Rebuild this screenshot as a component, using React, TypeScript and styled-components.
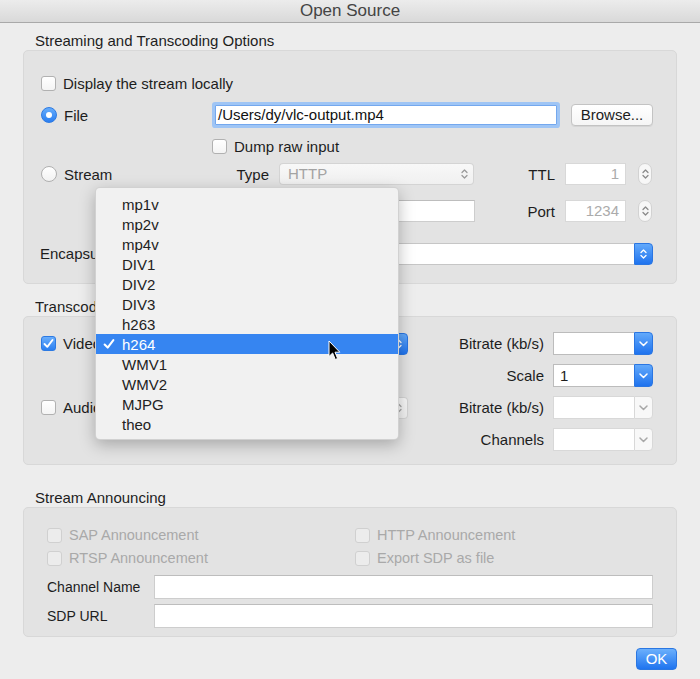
import React from 'react';
import styled, { createGlobalStyle } from 'styled-components';

/**
 * Icons
 */
const UpDown = ({ color }: { color: string }) => (
  <svg width="7" height="12" viewBox="0 0 7 12">
    <path
      d="M1 4.5 L3.5 2 L6 4.5 M1 7.5 L3.5 10 L6 7.5"
      fill="none"
      stroke={color}
      strokeWidth="1.3"
      strokeLinecap="round"
      strokeLinejoin="round"
    />
  </svg>
);

const Down = ({ color }: { color: string }) => (
  <svg width="9" height="6" viewBox="0 0 9 6">
    <path d="M1 1 L4.5 4.5 L8 1" fill="none" stroke={color} strokeWidth="1.5" strokeLinecap="round" strokeLinejoin="round" />
  </svg>
);

const Tick = ({ size = 11 }: { size?: number }) => (
  <svg width={size} height={size} viewBox="0 0 11 11">
    <path d="M1.5 6 L4.3 8.8 L9.5 2" fill="none" stroke="#fff" strokeWidth="1.9" strokeLinecap="round" strokeLinejoin="round" />
  </svg>
);

const Cursor = () => (
  <svg width="13" height="21" viewBox="0 0 13 21">
    <path d="M1 1 L1 16.5 L4.6 13 L7.3 19.5 L9.6 18.5 L7 12.2 L11.8 12.2 Z" fill="#000" stroke="#fff" strokeWidth="1" strokeLinejoin="round" />
  </svg>
);

/**
 * Consts
 */
const codecs = ['mp1v', 'mp2v', 'mp4v', 'DIV1', 'DIV2', 'DIV3', 'h263', 'h264', 'WMV1', 'WMV2', 'MJPG', 'theo'];
const selectedCodec = 'h264';

const App = () => {
  return (
    <Window>
      <GlobalStyle />
      <TitleBar>Open Source</TitleBar>
      <Body>
        <SectionTitle $top={9}>Streaming and Transcoding Options</SectionTitle>
        <GroupBox $pad="22px 23px 18px 17px">
          <Row $h={20}>
            <Checkbox />
            <Label>Display the stream locally</Label>
          </Row>

          <Row $h={26} $top={9}>
            <LeftCell>
              <Radio $on />
              <Label>File</Label>
            </LeftCell>
            <FileField>/Users/dy/vlc-output.mp4</FileField>
            <Button>Browse...</Button>
          </Row>

          <Row $h={18} $top={9} $indent={171}>
            <Checkbox />
            <Label>Dump raw input</Label>
          </Row>

          <Row $h={22} $top={8}>
            <LeftCell>
              <Radio />
              <Label>Stream</Label>
            </LeftCell>
            <FieldLabel $w={67}>Type</FieldLabel>
            <PopUp $w={195}>
              <PopUpBody $muted>HTTP</PopUpBody>
              <PopUpEnd>
                <UpDown color="#9a9a9a" />
              </PopUpEnd>
            </PopUp>
            <FieldLabel $w={91}>TTL</FieldLabel>
            <NumField>1</NumField>
            <Stepper>
              <UpDown color="#8a8a8a" />
            </Stepper>
          </Row>

          <Row $h={22} $top={15}>
            <LeftCell />
            <FieldLabel $w={67}>Address</FieldLabel>
            <TextField $w={196} />
            <FieldLabel $w={90}>Port</FieldLabel>
            <NumField>1234</NumField>
            <Stepper>
              <UpDown color="#8a8a8a" />
            </Stepper>
          </Row>

          <Row $h={23} $top={20}>
            <Label $flush>Encapsulation</Label>
            <PopUp $grow>
              <PopUpBody />
              <PopUpEnd $blue>
                <UpDown color="#fff" />
              </PopUpEnd>
            </PopUp>
          </Row>
        </GroupBox>

        <SectionTitle $top={14}>Transcoding options</SectionTitle>
        <GroupBox $pad="15px 23px 13px 17px">
          <TranscodeGrid>
            <Cell>
              <Checkbox $checked>
                <Tick />
              </Checkbox>
              <Label>Video</Label>
            </Cell>
            <PopUp>
              <PopUpBody />
              <PopUpEnd $blue>
                <UpDown color="#fff" />
              </PopUpEnd>
            </PopUp>
            <GridLabel>Bitrate (kb/s)</GridLabel>
            <Combo>
              <ComboField />
              <ComboArrow>
                <Down color="#fff" />
              </ComboArrow>
            </Combo>

            <Cell />
            <Cell />
            <GridLabel>Scale</GridLabel>
            <Combo>
              <ComboField>1</ComboField>
              <ComboArrow>
                <Down color="#fff" />
              </ComboArrow>
            </Combo>

            <Cell>
              <Checkbox />
              <Label>Audio</Label>
            </Cell>
            <PopUp>
              <PopUpBody $muted />
              <PopUpEnd>
                <UpDown color="#a5a5a5" />
              </PopUpEnd>
            </PopUp>
            <GridLabel>Bitrate (kb/s)</GridLabel>
            <Combo>
              <ComboField $disabled />
              <ComboArrow $disabled>
                <Down color="#a8a8a8" />
              </ComboArrow>
            </Combo>

            <Cell />
            <Cell />
            <GridLabel>Channels</GridLabel>
            <Combo>
              <ComboField $disabled />
              <ComboArrow $disabled>
                <Down color="#a8a8a8" />
              </ComboArrow>
            </Combo>
          </TranscodeGrid>
        </GroupBox>

        <SectionTitle $top={24}>Stream Announcing</SectionTitle>
        <GroupBox $pad="18px 23px 8px 23px">
          <AnnounceGrid>
            <Cell>
              <Checkbox $disabled />
              <Label $disabled>SAP Announcement</Label>
            </Cell>
            <Cell>
              <Checkbox $disabled />
              <Label $disabled>HTTP Announcement</Label>
            </Cell>
            <Cell>
              <Checkbox $disabled />
              <Label $disabled>RTSP Announcement</Label>
            </Cell>
            <Cell>
              <Checkbox $disabled />
              <Label $disabled>Export SDP as file</Label>
            </Cell>
          </AnnounceGrid>
          <Row $h={24} $top={8}>
            <SmallLabel>Channel Name</SmallLabel>
            <TextField $grow $h={24} />
          </Row>
          <Row $h={24} $top={5}>
            <SmallLabel>SDP URL</SmallLabel>
            <TextField $grow $h={24} />
          </Row>
        </GroupBox>

        <Footer>
          <OkButton>OK</OkButton>
        </Footer>
      </Body>

      <Menu>
        {codecs.map((codec) => {
          const selected = codec === selectedCodec;
          return (
            <MenuItem key={codec} $selected={selected}>
              <CheckSlot>{selected && <Tick size={12} />}</CheckSlot>
              {codec}
            </MenuItem>
          );
        })}
      </Menu>
      <Pointer>
        <Cursor />
      </Pointer>
    </Window>
  );
};

/**
 * Styled Components
 */
const GlobalStyle = createGlobalStyle`
  html, body {
    margin: 0;
    padding: 0;
    background: #ececec;
  }
  body {
    font-family: "Liberation Sans", Arial, sans-serif;
    font-size: 15px;
    color: #1d1d1d;
  }
`;

const Window = styled.div`
  position: relative;
  width: 700px;
  height: 679px;
  overflow: hidden;
  background: #ededed;
`;

const TitleBar = styled.div`
  height: 22px;
  line-height: 22px;
  text-align: center;
  font-size: 17px;
  color: #444;
  background: linear-gradient(#ececec, #d9d9d9);
  border-bottom: 1px solid #a9a9a9;
`;

const Body = styled.div`
  padding: 0 23px;
`;

const SectionTitle = styled.div<{ $top: number }>`
  margin-top: ${(p) => p.$top}px;
  padding-left: 12px;
  height: 18px;
  line-height: 18px;
  color: #1e1e1e;
`;

const GroupBox = styled.div<{ $pad: string }>`
  background: #e3e3e3;
  border: 1px solid #d8d8d8;
  border-radius: 5px;
  padding: ${(p) => p.$pad};
`;

const Row = styled.div<{ $h: number; $top?: number; $indent?: number }>`
  display: flex;
  align-items: center;
  height: ${(p) => p.$h}px;
  margin-top: ${(p) => p.$top || 0}px;
  padding-left: ${(p) => p.$indent || 0}px;
`;

const LeftCell = styled.div`
  display: flex;
  align-items: center;
  width: 171px;
  flex-shrink: 0;
`;

const Cell = styled.div`
  display: flex;
  align-items: center;
`;

const Label = styled.span<{ $disabled?: boolean; $flush?: boolean }>`
  margin-left: ${(p) => (p.$flush ? '-1px' : '7px')};
  white-space: nowrap;
  color: ${(p) => (p.$disabled ? '#a9a9a9' : '#1d1d1d')};
`;

/* right-aligned label; its width covers the gap to the control after it */
const FieldLabel = styled.span<{ $w: number }>`
  width: ${(p) => p.$w}px;
  flex-shrink: 0;
  padding-right: 10px;
  box-sizing: border-box;
  display: flex;
  justify-content: flex-end;
  white-space: nowrap;
`;

const GridLabel = styled.span`
  text-align: right;
  white-space: nowrap;
`;

const SmallLabel = styled.span`
  width: 107px;
  flex-shrink: 0;
  font-size: 14px;
  white-space: nowrap;
`;

const Checkbox = styled.span<{ $checked?: boolean; $disabled?: boolean }>`
  width: 15px;
  height: 15px;
  box-sizing: border-box;
  border-radius: 3px;
  flex-shrink: 0;
  display: flex;
  align-items: center;
  justify-content: center;
  background: ${(p) =>
    p.$checked ? 'linear-gradient(#6aaefc, #2a7ff1)' : p.$disabled ? '#ececec' : 'linear-gradient(#ffffff, #f4f4f4)'};
  border: 1px solid ${(p) => (p.$checked ? '#2c7ae3' : p.$disabled ? '#d0d0d0' : '#b1b1b1')};
`;

const Radio = styled.span<{ $on?: boolean }>`
  position: relative;
  width: 16px;
  height: 16px;
  box-sizing: border-box;
  border-radius: 50%;
  flex-shrink: 0;
  background: ${(p) => (p.$on ? 'linear-gradient(#66adfc, #2a7ef0)' : 'linear-gradient(#ffffff, #f2f2f2)')};
  border: 1px solid ${(p) => (p.$on ? '#2d7ae2' : '#b0b0b0')};
  &::after {
    content: '';
    display: ${(p) => (p.$on ? 'block' : 'none')};
    position: absolute;
    left: 4px;
    top: 4px;
    width: 6px;
    height: 6px;
    border-radius: 50%;
    background: #fff;
  }
`;

const FileField = styled.div`
  width: 342px;
  height: 20px;
  margin: 0 3px;
  flex-shrink: 0;
  box-sizing: border-box;
  padding-left: 2px;
  line-height: 18px;
  background: #fff;
  border: 1px solid #74a8ee;
  border-radius: 1px;
  box-shadow: 0 0 0 3px #9fc5f5;
  color: #111;
`;

const Button = styled.div`
  width: 82px;
  height: 22px;
  margin-left: 11px;
  box-sizing: border-box;
  line-height: 20px;
  text-align: center;
  background: linear-gradient(#ffffff, #f5f5f5);
  border: 1px solid #c3c3c3;
  border-radius: 4px;
  box-shadow: 0 1px 0 rgba(0, 0, 0, 0.06);
`;

const TextField = styled.div<{ $w?: number; $grow?: boolean; $h?: number }>`
  width: ${(p) => (p.$w ? `${p.$w}px` : 'auto')};
  flex: ${(p) => (p.$grow ? 1 : '0 0 auto')};
  height: ${(p) => p.$h || 22}px;
  box-sizing: border-box;
  background: #fff;
  border: 1px solid #cdcdcd;
  border-top-color: #bdbdbd;
`;

const NumField = styled.div`
  width: 61px;
  height: 22px;
  flex-shrink: 0;
  box-sizing: border-box;
  padding-right: 6px;
  line-height: 20px;
  text-align: right;
  background: #fff;
  border: 1px solid #d8d8d8;
  color: #ababab;
`;

const Stepper = styled.div`
  width: 14px;
  height: 22px;
  margin-left: 12px;
  flex-shrink: 0;
  box-sizing: border-box;
  display: flex;
  align-items: center;
  justify-content: center;
  background: #f7f7f7;
  border: 1px solid #d2d2d2;
  border-radius: 7px;
`;

const PopUp = styled.div<{ $w?: number; $grow?: boolean }>`
  display: flex;
  height: 22px;
  width: ${(p) => (p.$w ? `${p.$w}px` : 'auto')};
  flex: ${(p) => (p.$grow ? 1 : '0 0 auto')};
  margin-left: ${(p) => (p.$grow ? '14px' : '0')};
`;

const PopUpBody = styled.div<{ $muted?: boolean }>`
  flex: 1;
  box-sizing: border-box;
  padding-left: 8px;
  line-height: 20px;
  color: #a3a3a3;
  background: ${(p) => (p.$muted ? 'linear-gradient(#f8f8f8, #f0f0f0)' : '#fff')};
  border: 1px solid ${(p) => (p.$muted ? '#d4d4d4' : '#c6c6c6')};
  border-right: none;
  border-radius: 4px 0 0 4px;
`;

const PopUpEnd = styled.div<{ $blue?: boolean }>`
  width: 19px;
  box-sizing: border-box;
  display: flex;
  align-items: center;
  justify-content: center;
  border-radius: 0 4px 4px 0;
  background: ${(p) => (p.$blue ? 'linear-gradient(#62a9fb, #1f73ee)' : 'linear-gradient(#f8f8f8, #f0f0f0)')};
  border: 1px solid ${(p) => (p.$blue ? '#2a76e2' : '#d4d4d4')};
  border-left: ${(p) => (p.$blue ? '1px solid #2a76e2' : 'none')};
`;

const TranscodeGrid = styled.div`
  display: grid;
  grid-template-columns: 72px 286px 127px 100px;
  grid-auto-rows: 23px;
  column-gap: 9px;
  row-gap: 9px;
  align-items: center;
`;

const Combo = styled.div`
  display: flex;
  height: 23px;
`;

const ComboField = styled.div<{ $disabled?: boolean }>`
  flex: 1;
  box-sizing: border-box;
  padding-left: 6px;
  line-height: 21px;
  background: #fff;
  border: 1px solid ${(p) => (p.$disabled ? '#d8d8d8' : '#bcbcbc')};
  border-right: none;
`;

const ComboArrow = styled.div<{ $disabled?: boolean }>`
  width: 19px;
  box-sizing: border-box;
  display: flex;
  align-items: center;
  justify-content: center;
  border-radius: 0 4px 4px 0;
  background: ${(p) => (p.$disabled ? '#f8f8f8' : 'linear-gradient(#62a9fb, #1f73ee)')};
  border: 1px solid ${(p) => (p.$disabled ? '#d8d8d8' : '#2a76e2')};
`;

const AnnounceGrid = styled.div`
  display: grid;
  grid-template-columns: 308px 1fr;
  grid-auto-rows: 18px;
  row-gap: 5px;
  font-size: 14.5px;
`;

const Footer = styled.div`
  display: flex;
  justify-content: flex-end;
  margin-top: 11px;
`;

const OkButton = styled.div`
  width: 41px;
  height: 22px;
  box-sizing: border-box;
  line-height: 20px;
  text-align: center;
  color: #fff;
  font-size: 15px;
  background: linear-gradient(#6cb0fc, #1f74ef);
  border: 1px solid #2b77e2;
  border-radius: 4px;
`;

const Menu = styled.div`
  position: absolute;
  left: 95px;
  top: 187px;
  width: 304px;
  box-sizing: border-box;
  padding: 6px 0 5px;
  background: #f1f1f1;
  border: 1px solid rgba(0, 0, 0, 0.13);
  border-radius: 5px;
  box-shadow: 0 5px 16px rgba(0, 0, 0, 0.26);
`;

const MenuItem = styled.div<{ $selected?: boolean }>`
  display: flex;
  align-items: center;
  height: 20px;
  padding-left: 7px;
  color: ${(p) => (p.$selected ? '#fff' : '#222')};
  background: ${(p) => (p.$selected ? '#3685f1' : 'transparent')};
`;

const CheckSlot = styled.span`
  width: 19px;
  display: flex;
  align-items: center;
`;

const Pointer = styled.div`
  position: absolute;
  left: 328px;
  top: 340px;
  line-height: 0;
`;

export default App;
